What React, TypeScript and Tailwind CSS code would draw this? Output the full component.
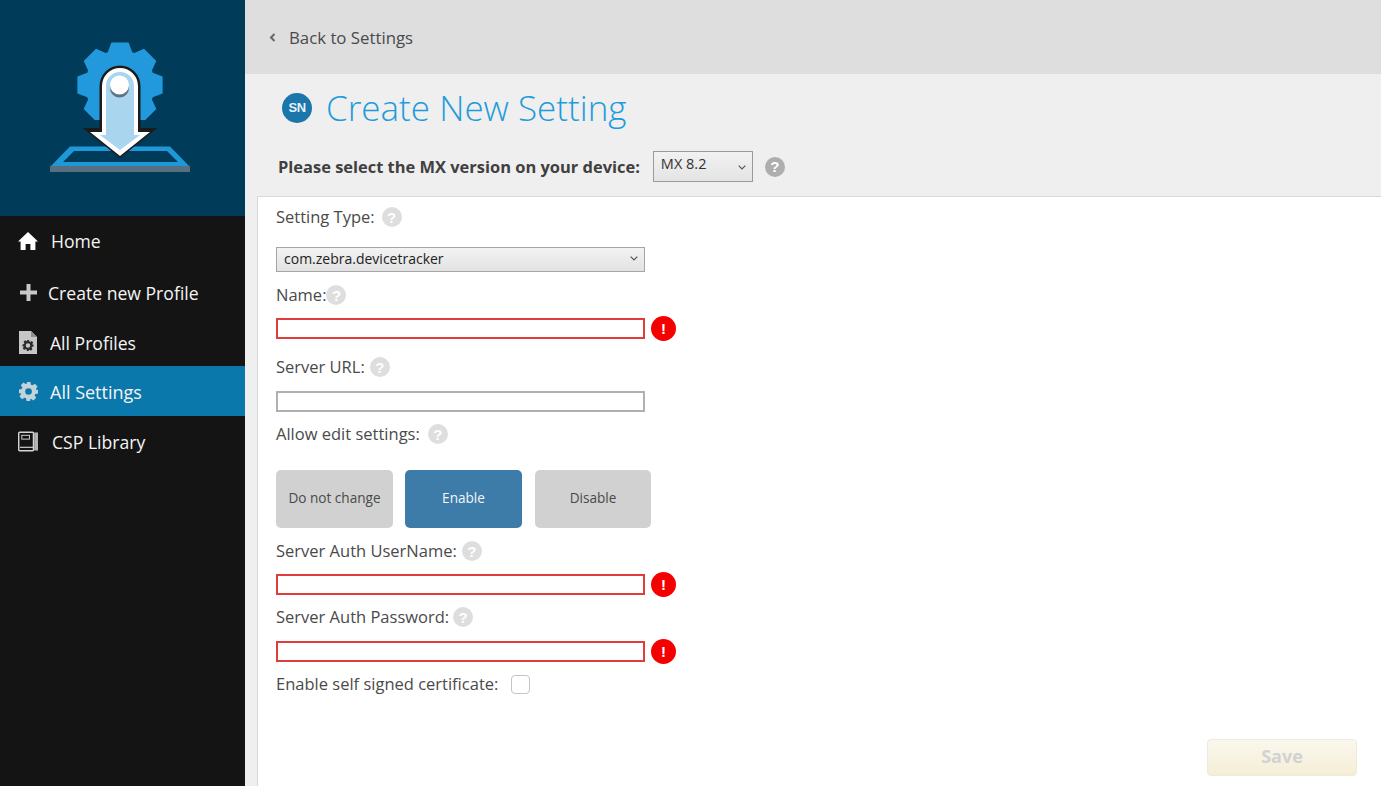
import React from "react";

const font = "font-['Open_Sans','Noto_Sans',sans-serif]";

function Help({ dark = false, className = "" }: { dark?: boolean; className?: string }) {
  return (
    <span
      className={`inline-flex h-[20px] w-[20px] shrink-0 items-center justify-center rounded-full font-['Liberation_Sans',sans-serif] text-[15px] font-bold leading-none text-white ${dark ? "bg-[#aeaeae]" : "bg-[#dedede]"} ${className}`}
    >
      ?
    </span>
  );
}

function Label({ text, gap = "ml-[6px]" }: { text: string; gap?: string }) {
  return (
    <div className="flex h-[24px] items-center text-[16.5px] leading-[24px] text-[#4a4a4a]">
      <span>{text}</span>
      <Help className={gap} />
    </div>
  );
}

function ErrorInput() {
  return (
    <div className="flex items-center">
      <input aria-label="value" className="h-[21px] w-[369px] border-2 border-[#e03c3c] bg-white outline-none" />
      <span className="ml-[6px] flex h-[25px] w-[25px] items-center justify-center rounded-full bg-[#f50000] font-['Liberation_Sans',sans-serif] text-[15px] font-bold leading-none text-white">
        !
      </span>
    </div>
  );
}

function gearPath(cx: number, cy: number, outer: number, root: number, teeth: number) {
  const pts: string[] = [];
  const step = (Math.PI * 2) / teeth;
  for (let i = 0; i < teeth; i++) {
    const a = -Math.PI / 2 + i * step;
    const corners: [number, number][] = [
      [root, -0.36],
      [outer, -0.2],
      [outer, 0.2],
      [root, 0.36],
    ];
    corners.forEach(([r, d]) => {
      const t = a + d;
      pts.push(`${(cx + r * Math.cos(t)).toFixed(1)} ${(cy + r * Math.sin(t)).toFixed(1)}`);
    });
  }
  return `M${pts.join("L")}Z`;
}

function Logo() {
  return (
    <svg width="150" height="140" viewBox="0 0 150 140" aria-hidden="true">
      <g transform="translate(-48,-38)">
        <path fill="#2299dc" d={gearPath(120, 85, 43.5, 35, 8)} />
        <rect x="90" y="120" width="60" height="12" fill="#003c5a" />
        <path fill="#1f98d9" d="M50 167 70 146.500H170L190 167Z" />
        <path fill="#003c5a" d="M63 162 74 151H167L178 162Z" />
        <rect x="50" y="166" width="140" height="6" fill="#56707f" />
        <path fill="#1b1b1b" d="M99.500 128V86a20.500 20.500 0 0 1 41 0v42h17l-37.500 30-37.500-30z" />
        <path fill="#ffffff" d="M102 132V86a18 18 0 0 1 36 0v46h12l-30 24-30-24z" />
        <path fill="#a9d5ee" d="M106 135V86a14 14 0 0 1 28 0v49h6l-20 15-20-15z" />
        <circle cx="119.500" cy="88" r="9.500" fill="#5f7080" />
        <circle cx="119.500" cy="85" r="9.500" fill="#ffffff" />
      </g>
    </svg>
  );
}

function Home() {
  return (
    <svg width="20" height="18" viewBox="0 0 20 18" aria-hidden="true" fill="#ffffff">
      <path d="M10 0 20 9.500h-2.600V18h-5v-6H7.600v6h-5V9.500H0z" />
    </svg>
  );
}

function Plus() {
  return (
    <svg width="17" height="17" viewBox="0 0 17 17" aria-hidden="true" fill="#c8c8c8">
      <path d="M6.500 0h4v6.500H17v4h-6.500V17h-4v-6.500H0v-4h6.500z" />
    </svg>
  );
}

const GEAR =
  "M8 0h4l.6 2.800 1.700.7 2.400-1.600 2.800 2.800-1.600 2.400.7 1.700L20 8v4l-2.800.6-.7 1.700 1.600 2.400-2.800 2.800-2.400-1.600-1.700.7L12 20H8l-.6-2.800-1.700-.7-2.400 1.600-2.800-2.800 1.600-2.400-.7-1.700L0 12V8l2.800-.6.7-1.700-1.600-2.400 2.800-2.800 2.400 1.600 1.700-.7z";

function Gear({ size, color, hole }: { size: number; color: string; hole: string }) {
  return (
    <svg width={size} height={size} viewBox="0 0 20 20" aria-hidden="true">
      <path fill={color} d={GEAR} />
      <circle cx="10" cy="10" r="3.500" fill={hole} />
    </svg>
  );
}

function ProfileDoc() {
  return (
    <svg width="18" height="23" viewBox="0 0 18 23" aria-hidden="true">
      <path fill="#c6c6c6" d="M0 0h12l6 6v17H0z" />
      <path fill="#8f8f8f" d="M12 0l6 6h-6z" />
      <g transform="translate(3.500,9) scale(0.55)">
        <path fill="#2b2b2b" d={GEAR} />
        <circle cx="10" cy="10" r="4" fill="#c6c6c6" />
      </g>
    </svg>
  );
}

function Book() {
  return (
    <svg width="21" height="21" viewBox="0 0 21 21" aria-hidden="true">
      <rect x="0.750" y="0.750" width="15.500" height="19.500" rx="1" fill="none" stroke="#d4d4d4" strokeWidth="1.500" />
      <rect x="4" y="4" width="8" height="4" fill="none" stroke="#d4d4d4" />
      <rect x="2" y="16" width="14" height="1.200" fill="#d4d4d4" />
      <rect x="17" y="1" width="4" height="19" fill="#b5b5b5" />
    </svg>
  );
}

function NavItem({
  icon,
  label,
  h,
  ml,
  active = false,
}: {
  icon: React.ReactNode;
  label: string;
  h: string;
  ml: string;
  active?: boolean;
}) {
  return (
    <div className={`flex items-center pl-[18px] text-[17.6px] text-[#f4f4f4] ${h} ${active ? "bg-[#0a78ab]" : ""}`}>
      <span className="flex w-[20px] justify-center">{icon}</span>
      <span className={ml}>{label}</span>
    </div>
  );
}

function Chevron({ className = "" }: { className?: string }) {
  return (
    <svg width="8" height="5" viewBox="0 0 8 5" aria-hidden="true" className={className}>
      <path d="M.700.700 4 4l3.300-3.300" fill="none" stroke="#555555" strokeWidth="1.200" />
    </svg>
  );
}

function Choice({ label, active = false, width }: { label: string; active?: boolean; width: string }) {
  return (
    <div
      className={`flex h-[58px] items-center justify-center rounded-[5px] pb-[2px] text-[13.6px] ${width} ${active ? "bg-[#3d7ba8] text-[#f2f6f9]" : "bg-[#d1d1d1] text-[#4a4a4a]"}`}
    >
      {label}
    </div>
  );
}

export default function App() {
  return (
    <div className={`flex h-[786px] w-[1381px] overflow-hidden bg-white ${font}`}>
      <aside className="flex w-[245px] shrink-0 flex-col bg-[#141414]">
        <div className="flex h-[216px] items-center justify-center bg-[#003c5a]">
          <Logo />
        </div>
        <nav>
          <NavItem icon={<Home />} label="Home" h="h-[50px]" ml="ml-[13px]" />
          <NavItem icon={<Plus />} label="Create new Profile" h="h-[52px]" ml="ml-[10px] pt-[2px]" />
          <NavItem icon={<ProfileDoc />} label="All Profiles" h="h-[48px]" ml="ml-[12px] pt-[2px]" />
          <NavItem icon={<Gear size={19} color="#c4d2da" hole="#0a78ab" />} label="All Settings" h="h-[50px]" ml="ml-[12px] pt-[2px] text-[18px]" active />
          <NavItem icon={<Book />} label="CSP Library" h="h-[50px]" ml="ml-[14px] pt-[2px]" />
        </nav>
      </aside>

      <main className="flex min-w-0 flex-1 flex-col bg-[#efefef]">
        <div className="flex h-[74px] items-center bg-[#dedede] pl-[24px] text-[#4a4a4a]">
          <svg width="7" height="9" viewBox="0 0 7 9" aria-hidden="true">
            <path d="M5.500 1 2 4.500 5.500 8" fill="none" stroke="#666666" strokeWidth="2" />
          </svg>
          <span className="ml-[13px] pt-[2px] text-[16.8px]">Back to Settings</span>
        </div>
        <div className="flex h-[122px] flex-col">
          <div className="mt-[9px] flex items-center pl-[37px]">
            <span className="flex h-[30px] w-[30px] items-center justify-center rounded-full bg-[#1b76ab] font-['Liberation_Sans',sans-serif] text-[13px] font-bold tracking-[-0.5px] text-[#e8f2f8]">
              SN
            </span>
            <h1 className="ml-[14px] text-[35px] font-light leading-[50px] text-[#1e9bdc]">Create New Setting</h1>
          </div>
          <div className="mt-[18px] flex items-center pl-[33px]">
            <span className="pt-[2px] text-[16.46px] font-bold text-[#404040]">Please select the MX version on your device:</span>
            <div className="relative ml-[13px] flex h-[31px] w-[100px] items-start border border-[#9a9a9a] bg-gradient-to-b from-[#f2f2f2] to-[#e4e4e4] pl-[7px] pt-[1px] text-[14.5px] text-[#333333]">
              MX 8.2
              <Chevron className="absolute right-[6px] top-[13px]" />
            </div>
            <Help dark className="ml-[12px]" />
          </div>
        </div>
        <div className="ml-[12px] flex-1 border-l border-t border-[#d8d8d8] bg-white pl-[18px]">
          <div className="pt-[8px]">
            <Label text="Setting Type:" gap="ml-[7px]" />
          </div>
          <div className="relative mt-[18px] flex h-[25px] w-[369px] items-center border border-[#a5a5a5] bg-gradient-to-b from-[#f3f3f3] to-[#e2e2e2] pb-[2px] pl-[7px] text-[14px] text-[#222222]">
            com.zebra.devicetracker
            <Chevron className="absolute right-[6px] top-[8px]" />
          </div>
          <div className="mt-[11px]">
            <Label text="Name:" gap="ml-0" />
          </div>
          <div className="mt-[9px]">
            <ErrorInput />
          </div>
          <div className="mt-[14px]">
            <Label text="Server URL:" gap="ml-[5px]" />
          </div>
          <input aria-label="Server URL" className="mt-[12px] block h-[21px] w-[369px] border-2 border-[#b0b0b0] bg-white outline-none" />
          <div className="mt-[10px]">
            <Label text="Allow edit settings:" gap="ml-[8px]" />
          </div>
          <div className="mt-[24px] flex gap-[12px]">
            <Choice label="Do not change" width="w-[117px]" />
            <Choice label="Enable" active width="w-[117px]" />
            <Choice label="Disable" width="w-[116px] ml-[1px]" />
          </div>
          <div className="mt-[11px]">
            <Label text="Server Auth UserName:" gap="ml-[5px]" />
          </div>
          <div className="mt-[9px]">
            <ErrorInput />
          </div>
          <div className="mt-[8px]">
            <Label text="Server Auth Password:" gap="ml-[4px]" />
          </div>
          <div className="mt-[10px]">
            <ErrorInput />
          </div>
          <div className="mt-[8px] flex h-[24px] items-center text-[16.5px] text-[#4a4a4a]">
            <span>Enable self signed certificate:</span>
            <span className="ml-[13px] h-[19px] w-[19px] rounded-[4px] border border-[#c4c4c4] bg-white" />
          </div>
          <div className="mr-[24px] mt-[43px] flex justify-end">
            <div className="flex h-[37px] w-[150px] items-center justify-center rounded-[4px] border border-[#eeeadd] bg-gradient-to-b from-[#faf8ee] to-[#f5eed6] pb-[2px] text-[18px] font-bold text-[#d2d2d2]">
              Save
            </div>
          </div>
        </div>
      </main>
    </div>
  );
}
